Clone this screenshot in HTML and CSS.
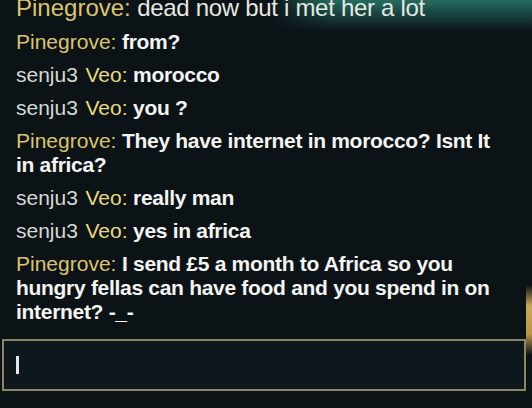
FILE: index.html
```html
<!DOCTYPE html>
<html>
<head>
<meta charset="utf-8">
<link rel="stylesheet" href="styles.css">
</head>
<body>
<div class="screen">
  <div class="log">
    <p class="msg first"><span class="name">Pinegrove:</span> <span class="txt thin">dead now but i met her a lot</span></p>
    <p class="msg"><span class="name">Pinegrove:</span> <span class="txt">from?</span></p>
    <p class="msg"><span class="user">senju3</span> <span class="name2">Veo:</span> <span class="txt">morocco</span></p>
    <p class="msg"><span class="user">senju3</span> <span class="name2">Veo:</span> <span class="txt">you ?</span></p>
    <p class="msg"><span class="name">Pinegrove:</span> <span class="txt">They have internet in morocco? Isnt It in africa?</span></p>
    <p class="msg"><span class="user">senju3</span> <span class="name2">Veo:</span> <span class="txt">really man</span></p>
    <p class="msg"><span class="user">senju3</span> <span class="name2">Veo:</span> <span class="txt">yes in africa</span></p>
    <p class="msg"><span class="name">Pinegrove:</span> <span class="txt">I send £5 a month to Africa so you hungry fellas can have food and you spend in on internet? -_-</span></p>
  </div>
  <div class="input"><span class="caret"></span></div>
</div>
</body>
</html>
```
FILE: styles.css
```css
html, body {
  margin: 0;
  padding: 0;
}
body {
  width: 532px;
  height: 408px;
  overflow: hidden;
  font-family: "Liberation Sans", Arial, sans-serif;
  background:
    linear-gradient(90deg, rgba(11,19,23,1) 0, rgba(11,19,23,0) 60px) 270px 0 / 262px 32px no-repeat,
    linear-gradient(180deg, rgba(38,118,104,0.9) 0px, rgba(28,88,80,0.7) 14px, rgba(10,30,34,0) 32px) 270px 0 / 262px 32px no-repeat,
    linear-gradient(180deg, rgba(200,170,80,0) 0, #c9a95a 30%, #b89648 70%, rgba(200,170,80,0) 100%) 526px 285px / 6px 70px no-repeat,
    #0b1317;
}
.screen {
  display: flex;
  flex-direction: column;
}
.log {
  display: flex;
  flex-direction: column;
  gap: 9px;
  padding: 0 22px 0 16px;
  margin-top: -6px;
}
.msg {
  margin: 0;
  font-size: 21px;
  line-height: 24px;
  color: #f3f3ee;
  letter-spacing: -0.3px;
}
.msg.first {
  font-size: 24px;
  line-height: 27px;
}
.name {
  color: #dcc46a;
  letter-spacing: 0;
}
.user {
  color: #d4d9d2;
  margin-right: 2px;
  letter-spacing: 0;
}
.name2 {
  color: #e8d97a;
  letter-spacing: 0;
}
.txt {
  font-weight: bold;
  color: #f4f4f0;
}
.txt.thin {
  font-weight: normal;
  color: #e6e8e0;
}
.input {
  margin: 15px 6px 0 2px;
  height: 48px;
  border: 2px solid #8b8663;
  background: #0e171b;
  display: flex;
  align-items: center;
  padding-left: 12px;
}
.caret {
  width: 3px;
  height: 18px;
  background: #e6e6e6;
}
```
